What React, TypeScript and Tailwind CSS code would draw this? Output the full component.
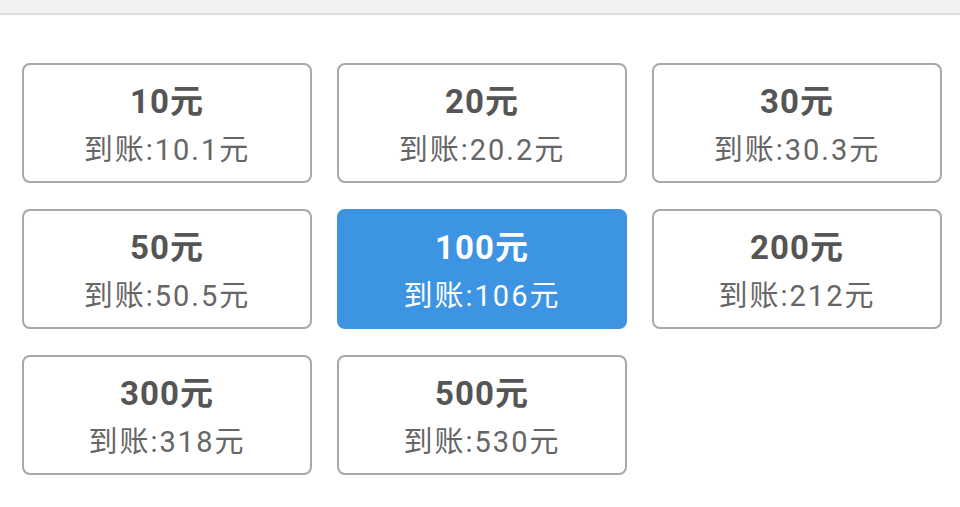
import React from 'react';

const options = [
    { amount: 10, receive: '10.1' },
    { amount: 20, receive: '20.2' },
    { amount: 30, receive: '30.3' },
    { amount: 50, receive: '50.5' },
    { amount: 100, receive: '106' },
    { amount: 200, receive: '212' },
    { amount: 300, receive: '318' },
    { amount: 500, receive: '530' },
];

export default function App() {
    const selected = 100;
    return (
        <div
            className="w-[960px] h-[507px] bg-white overflow-hidden"
            style={{ fontFamily: 'Roboto, "Noto Sans CJK SC", sans-serif' }}
        >
            <div className="h-[15px] bg-[#f2f2f2] border-b-2 border-[#dedede]" />
            <div className="grid grid-cols-3 gap-x-[25px] gap-y-[26px] px-[22px] pt-[48px] pr-[18px]">
                {options.map((o) => {
                    const active = o.amount === selected;
                    return (
                        <div
                            key={o.amount}
                            className={
                                active
                                    ? 'h-[120px] pt-[4px] rounded-[8px] border-2 border-[#3d94e3] bg-[#3d94e3] text-white flex flex-col items-center justify-center'
                                    : 'h-[120px] pt-[4px] rounded-[8px] border-2 border-[#a8a8a8] bg-white text-[#555555] flex flex-col items-center justify-center'
                            }
                        >
                            <div className="text-[33px] font-bold leading-[40px] tracking-[1px]">{o.amount}元</div>
                            <div className={active ? 'text-[29px] leading-[38px] mt-[9px] tracking-[2px] text-white' : 'text-[29px] leading-[38px] mt-[9px] tracking-[2px] text-[#666666]'}>
                                到账:{o.receive}元
                            </div>
                        </div>
                    );
                })}
            </div>
        </div>
    );
}
